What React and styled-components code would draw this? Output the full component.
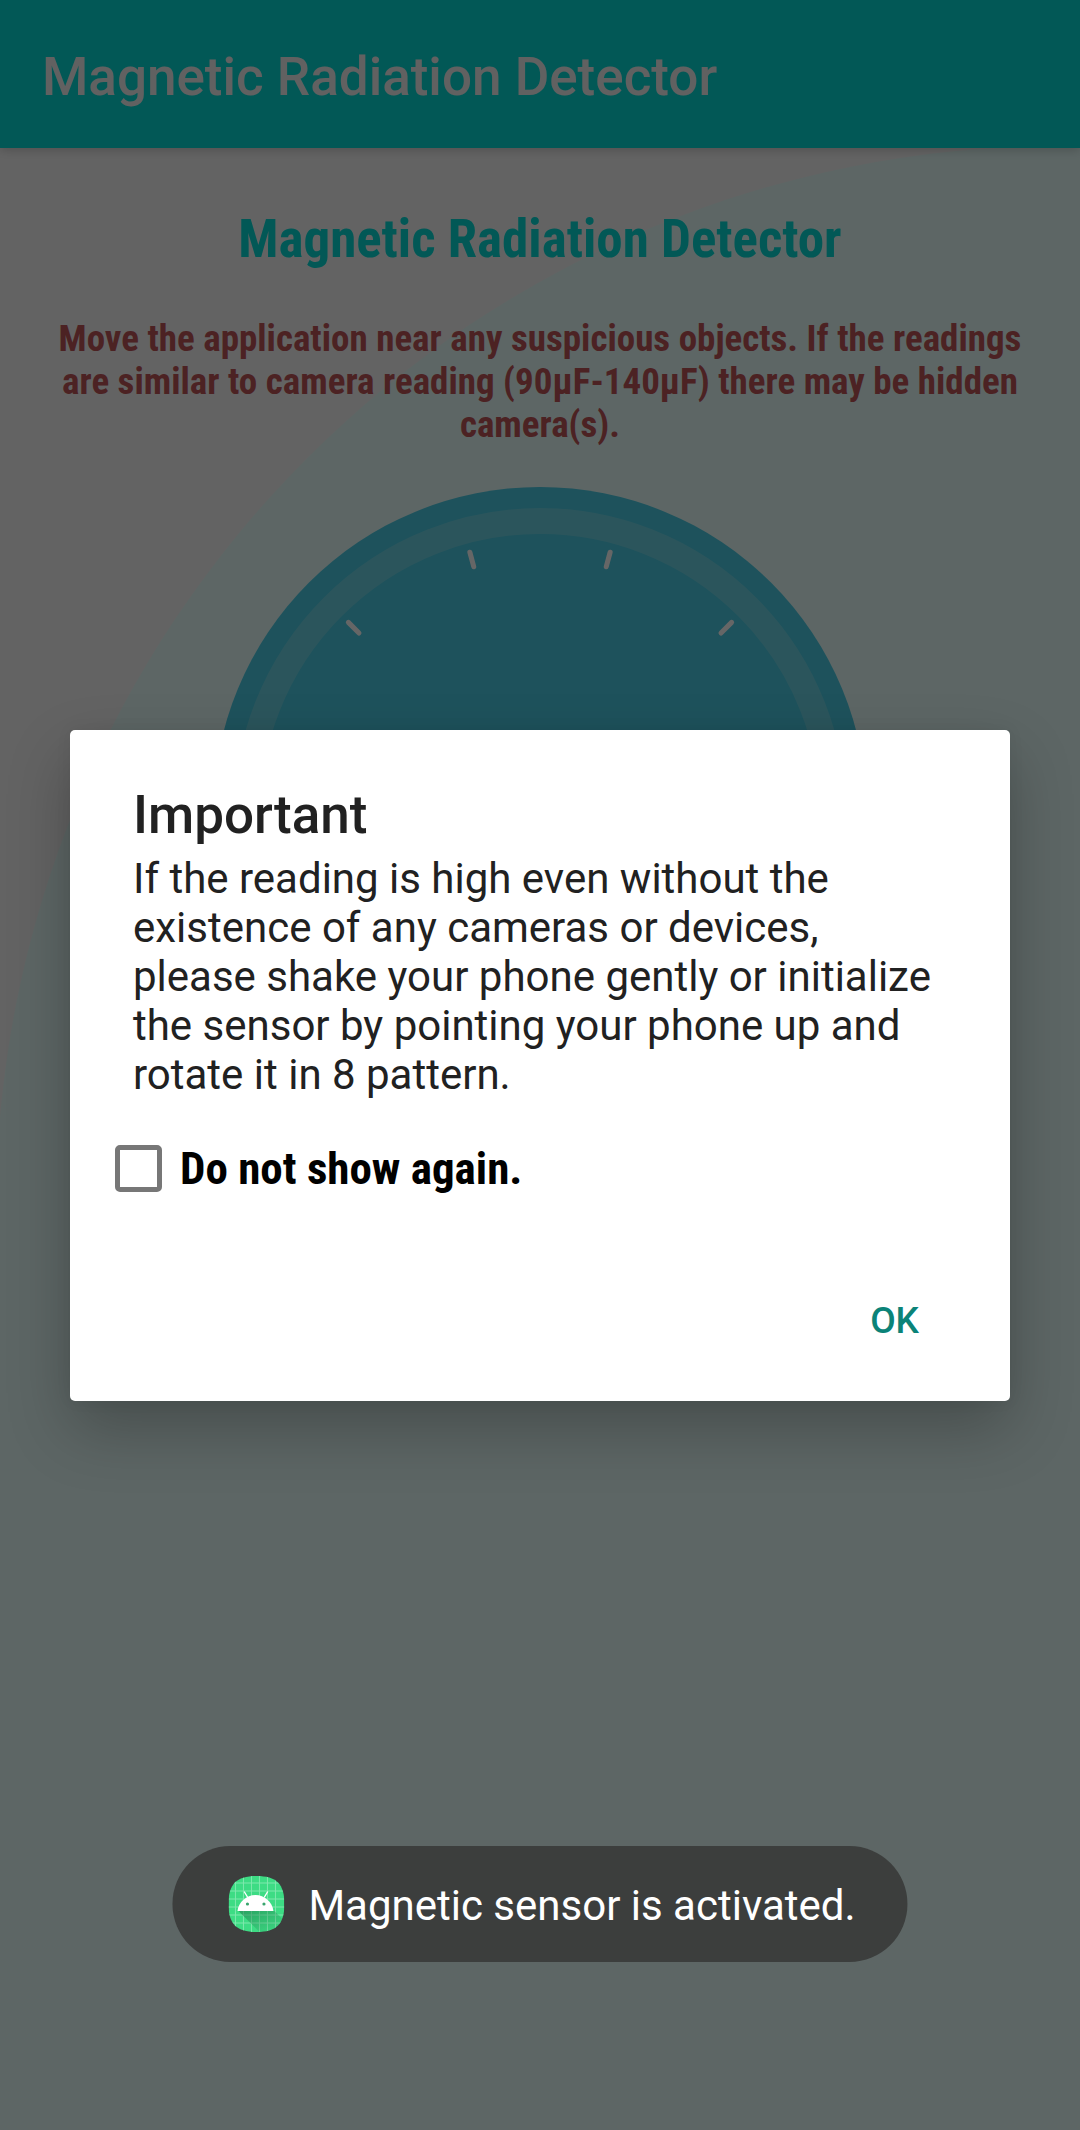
import React, { useState } from 'react';
import styled, { createGlobalStyle, ThemeProvider } from 'styled-components';

const theme = {
  brand: '#05dcd7',
  page: '#f8f8f8',
  wave: '#e8fffc',
  warning: '#be5558',
  dial: '#4bcde6',
  dialRing: '#6cd5e6',
  ink: '#212121',
  accent: '#0b8378',
  sans: 'Roboto, "Liberation Sans", sans-serif',
  condensed: '"Roboto Condensed", "Liberation Sans Narrow", Roboto, sans-serif',
};

const GlobalStyle = createGlobalStyle`
  *, *::before, *::after { box-sizing: border-box; }
  body { margin: 0; background: #636363; }
  h1, h2, p { margin: 0; }
`;

const Screen = styled.div`
  position: relative;
  display: flex;
  flex-direction: column;
  min-height: 100vh;
  overflow: hidden;
  background: ${({ theme }) => theme.page};
  font-family: ${({ theme }) => theme.sans};
`;

const AppBar = styled.header`
  position: relative;
  z-index: 1;
  display: flex;
  align-items: center;
  height: 148px;
  padding: 6px 42px 0;
  background: ${({ theme }) => theme.brand};
  box-shadow: 0 2px 10px rgba(0, 0, 0, 0.2);
`;

const AppTitle = styled.h1`
  color: #f2f2f2;
  font-size: 53px;
  font-weight: 500;
  line-height: 62px;
`;

const Content = styled.main`
  position: relative;
  flex: 1;
  display: flex;
  flex-direction: column;
  align-items: center;
  padding: 60px 42px;
`;

const Wave = styled.svg`
  position: absolute;
  inset: 0;
  width: 100%;
  height: 100%;
`;

const Heading = styled.h2`
  position: relative;
  margin-bottom: 47px;
  color: ${({ theme }) => theme.brand};
  font-family: ${({ theme }) => theme.condensed};
  font-size: 53px;
  font-weight: 700;
  line-height: 62px;
  text-align: center;
`;

const Hint = styled.p`
  position: relative;
  margin-bottom: 41px;
  color: ${({ theme }) => theme.warning};
  font-family: ${({ theme }) => theme.condensed};
  font-size: 37px;
  font-weight: 700;
  line-height: 43px;
  text-align: center;
`;

const Dial = styled.svg`
  position: relative;
  width: 654px;
  height: 654px;
`;

const Scrim = styled.div`
  position: absolute;
  inset: 0;
  z-index: 2;
  display: flex;
  align-items: center;
  justify-content: center;
  padding: 0 70px;
  background: rgba(0, 0, 0, 0.6);
`;

const Dialog = styled.section`
  flex: 1;
  padding: 54px 63px 33px;
  border-radius: 5px;
  background: #fff;
  box-shadow: 0 28px 64px rgba(0, 0, 0, 0.24), 0 0 16px rgba(0, 0, 0, 0.06);
  color: ${({ theme }) => theme.ink};
`;

const DialogTitle = styled.h2`
  margin-bottom: 8px;
  font-size: 53px;
  font-weight: 500;
  line-height: 62px;
`;

const DialogText = styled.p`
  margin-bottom: 28px;
  font-size: 42px;
  line-height: 49px;
`;

const Option = styled.label`
  display: flex;
  align-items: center;
  gap: 18px;
  height: 84px;
  margin-left: -18px;
  color: #000;
  font-family: ${({ theme }) => theme.condensed};
  font-size: 45px;
  font-weight: 700;
  line-height: 52px;
`;

const Checkbox = styled.input`
  appearance: none;
  width: 47px;
  height: 47px;
  margin: 0;
  border: 5px solid #777;
  border-radius: 5px;
  background: #fff;

  &:checked {
    border-color: ${({ theme }) => theme.accent};
    background: ${({ theme }) => theme.accent};
  }
`;

const Actions = styled.div`
  display: flex;
  justify-content: flex-end;
  margin-top: 63px;
`;

const TextButton = styled.button`
  height: 94px;
  padding: 0 28px;
  border: 0;
  background: none;
  color: ${({ theme }) => theme.accent};
  font-family: inherit;
  font-size: 37px;
  font-weight: 500;
  line-height: 44px;
`;

const Toast = styled.div`
  position: absolute;
  z-index: 3;
  bottom: 168px;
  left: 50%;
  display: flex;
  align-items: center;
  gap: 24px;
  height: 116px;
  padding: 0 52px 0 56px;
  border-radius: 58px;
  background: #3c3e3d;
  color: #fff;
  font-size: 42px;
  line-height: 50px;
  white-space: nowrap;
  transform: translateX(-50%);
`;

const ToastText = styled.span`
  padding-top: 4px;
`;

const ToastIcon = styled.svg`
  flex: none;
  width: 56px;
  height: 56px;
`;

const tickAngles = [-75, -45, -15, 15, 45, 75];
const gridLines = [7, 15, 23, 31, 39, 47];

function Backdrop() {
  return (
    <Wave aria-hidden="true">
      <path
        fill={theme.wave}
        d="M-4 1062A1064 1064 0 0 1 1060 -2H4000V6000H-4Z"
      />
    </Wave>
  );
}

function Gauge() {
  return (
    <Dial viewBox="0 0 654 654" aria-hidden="true">
      <circle cx="327" cy="327" r="327" fill={theme.dial} />
      <circle cx="327" cy="327" r="293" fill="none" stroke={theme.dialRing} strokeWidth="26" />
      {tickAngles.map((angle) => (
        <line
          key={angle}
          x1="327"
          x2="327"
          y1="56"
          y2="71"
          stroke="#fff"
          strokeWidth="5"
          strokeLinecap="round"
          transform={`rotate(${angle} 327 327)`}
        />
      ))}
    </Dial>
  );
}

function AndroidIcon() {
  return (
    <ToastIcon viewBox="0 0 56 56" aria-hidden="true">
      <defs>
        <clipPath id="icon-shape">
          <path d="M28 0C48 0 56 8 56 28S48 56 28 56 0 48 0 28 8 0 28 0Z" />
        </clipPath>
        <linearGradient id="icon-shade" x1="0" y1="0" x2="1" y2="1">
          <stop offset="0" stopColor="#1e7a4a" stopOpacity="0.6" />
          <stop offset="1" stopColor="#1e7a4a" stopOpacity="0" />
        </linearGradient>
      </defs>
      <g clipPath="url(#icon-shape)">
        <rect width="56" height="56" fill="#3ddc84" />
        <g stroke="#7fe8ad" strokeWidth="1">
          {gridLines.map((n) => (
            <path key={n} d={`M${n} 0V56M0 ${n}H56`} />
          ))}
        </g>
        <path d="M10 35L31 56H56V45L46 35Z" fill="url(#icon-shade)" />
        <path d="M9 35C10 26 18 19 27 19S44 26 45 35Z" fill="#fff" />
        <path d="M19 21L16 16M36 21L39 16" stroke="#fff" strokeWidth="1.4" strokeLinecap="round" />
        <circle cx="19" cy="28" r="1.6" fill="#3aa56e" />
        <circle cx="35.5" cy="28" r="1.6" fill="#3aa56e" />
      </g>
    </ToastIcon>
  );
}

export default function App() {
  const [hideNext, setHideNext] = useState(false);

  return (
    <ThemeProvider theme={theme}>
      <GlobalStyle />
      <Screen>
        <AppBar>
          <AppTitle>Magnetic Radiation Detector</AppTitle>
        </AppBar>
        <Content>
          <Backdrop />
          <Heading>Magnetic Radiation Detector</Heading>
          <Hint>
            Move the application near any suspicious objects. If the readings are similar to camera
            reading (90µF-140µF) there may be hidden camera(s).
          </Hint>
          <Gauge />
        </Content>
        <Scrim>
          <Dialog role="dialog" aria-labelledby="notice-title">
            <DialogTitle id="notice-title">Important</DialogTitle>
            <DialogText>
              If the reading is high even without the existence of any cameras or devices, please
              shake your phone gently or initialize the sensor by pointing your phone up and rotate
              it in 8 pattern.
            </DialogText>
            <Option htmlFor="hide-next">
              <Checkbox
                id="hide-next"
                type="checkbox"
                checked={hideNext}
                onChange={(event) => setHideNext(event.target.checked)}
              />
              Do not show again.
            </Option>
            <Actions>
              <TextButton type="button">OK</TextButton>
            </Actions>
          </Dialog>
        </Scrim>
        <Toast role="status">
          <AndroidIcon />
          <ToastText>Magnetic sensor is activated.</ToastText>
        </Toast>
      </Screen>
    </ThemeProvider>
  );
}
